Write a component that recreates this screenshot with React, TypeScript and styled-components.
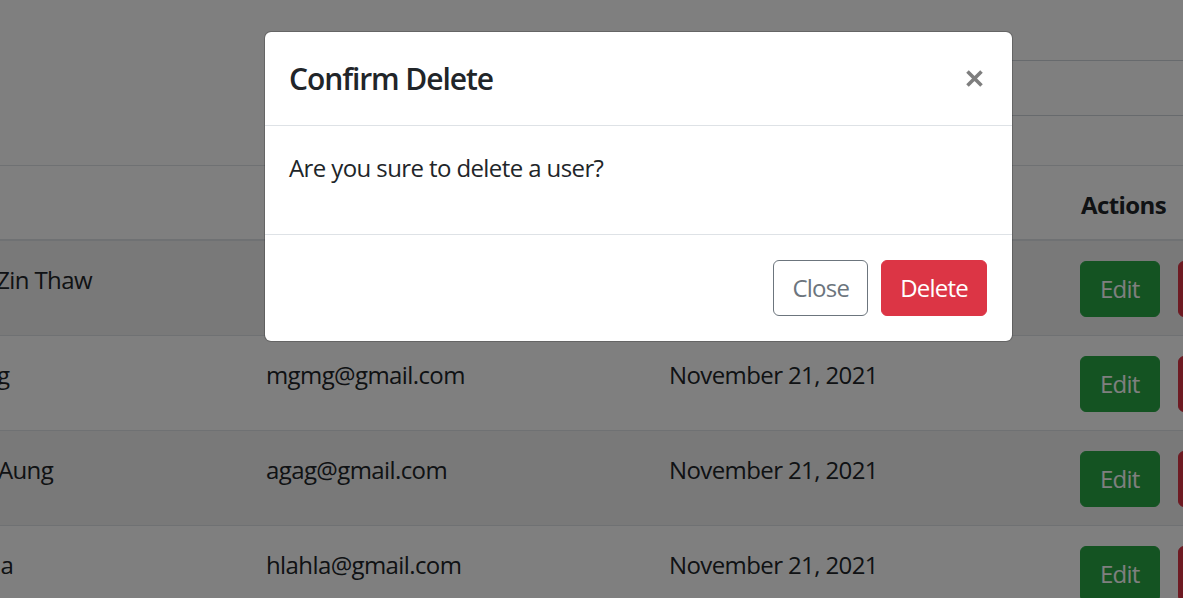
import React from 'react';
import styled, { createGlobalStyle } from 'styled-components';

const GlobalStyle = createGlobalStyle`
  * { box-sizing: border-box; }
  html, body { margin: 0; padding: 0; }
  body {
    width: 1183px;
    height: 598px;
    overflow: hidden;
    background: #fff;
    color: #212529;
    font-family: "Open Sans", "Noto Sans", sans-serif;
    font-size: 24px;
    line-height: 1.5;
    letter-spacing: -0.025em;
  }
`;

const Page = styled.div`
  position: relative;
  width: 1183px;
  height: 598px;
  overflow: hidden;
`;

const Canvas = styled.div`
  margin-left: -81px;
  width: 1400px;
`;

const TopBar = styled.div`
  height: 165px;
  padding-top: 60px;
  display: flex;
  justify-content: flex-end;
`;

const SearchInput = styled.input`
  width: 560px;
  height: 56px;
  margin-right: 78px;
  border: 1px solid #ced4da;
  border-radius: 6px;
  padding: 9px 18px;
  font: inherit;
  color: #495057;
  background: #fff;
`;

const Table = styled.table`
  border-collapse: collapse;
  table-layout: fixed;
  width: 1400px;
`;

const Th = styled.th`
  text-align: left;
  vertical-align: bottom;
  font-weight: 700;
  padding: 21px 18px 16px;
  border-top: 1px solid #dee2e6;
  border-bottom: 2px solid #dee2e6;
`;

const Row = styled.tr<{ $striped: boolean }>`
  background: ${(p) => (p.$striped ? 'rgba(0,0,0,0.05)' : 'transparent')};
`;

const Td = styled.td`
  padding: 21px 18px 15px;
  vertical-align: top;
  border-top: 1px solid #dee2e6;
  white-space: nowrap;
`;

const ActionCell = styled.td`
  padding: 18px 18px 18px 17px;
  vertical-align: top;
  border-top: 1px solid #dee2e6;
`;

const ActionGroup = styled.div`
  display: flex;
  gap: 18px;
  margin-top: 2px;
`;

const Btn = styled.button<{ $variant: 'success' | 'danger' | 'outline'; $wide?: boolean }>`
  display: inline-block;
  height: 56px;
  padding: 9px ${(p) => (p.$wide ? '19px' : '18px')};
  font: inherit;
  font-size: 24px;
  line-height: 36px;
  letter-spacing: -0.032em;
  border-radius: 6px;
  border: 1px solid
    ${(p) => (p.$variant === 'success' ? '#28a745' : p.$variant === 'danger' ? '#dc3545' : '#6c757d')};
  background: ${(p) => (p.$variant === 'success' ? '#28a745' : p.$variant === 'danger' ? '#dc3545' : 'transparent')};
  color: ${(p) => (p.$variant === 'outline' ? '#6c757d' : '#fff')};
  white-space: nowrap;
`;

const Backdrop = styled.div`
  position: absolute;
  inset: 0;
  background: rgba(0, 0, 0, 0.5);
`;

const Dialog = styled.div`
  position: absolute;
  left: 264px;
  top: 31px;
  width: 749px;
  background: #fff;
  background-clip: padding-box;
  border: 1px solid rgba(0, 0, 0, 0.2);
  border-radius: 7px;
`;

const DialogHeader = styled.div`
  display: flex;
  align-items: flex-start;
  justify-content: space-between;
  padding: 24px;
  border-bottom: 1px solid #dee2e6;
`;

const Title = styled.h5`
  margin: 0;
  font-size: 30px;
  font-weight: 600;
  line-height: 45px;
  letter-spacing: -0.036em;
  color: #212529;
`;

const CloseX = styled.button`
  width: 28px;
  height: 45px;
  padding: 0;
  border: 0;
  background: transparent;
  display: flex;
  align-items: center;
  justify-content: center;
  opacity: 0.5;
  color: #000;
`;

const DialogBody = styled.div`
  padding: 24px;
`;

const Message = styled.p`
  margin: 0 0 24px;
`;

const DialogFooter = styled.div`
  display: flex;
  justify-content: flex-end;
  align-items: center;
  gap: 13px;
  padding: 25px 25px 25px 24px;
  border-top: 1px solid #dee2e6;
`;

const users = [
  { name: 'Phyu Zin Thaw', email: 'phyuzin@gmail.com', date: 'November 21, 2021' },
  { name: 'Mg Mg', email: 'mgmg@gmail.com', date: 'November 21, 2021' },
  { name: 'Aung Aung', email: 'agag@gmail.com', date: 'November 21, 2021' },
  { name: 'Hla Hla', email: 'hlahla@gmail.com', date: 'November 21, 2021' },
];

export default function App() {
  return (
    <>
      <GlobalStyle />
      <Page>
        <Canvas>
          <TopBar>
            <SearchInput defaultValue="" />
          </TopBar>
          <Table>
            <colgroup>
              <col style={{ width: 329 }} />
              <col style={{ width: 403 }} />
              <col style={{ width: 412 }} />
              <col />
            </colgroup>
            <thead>
              <tr>
                <Th>User</Th>
                <Th>Email</Th>
                <Th>Created At</Th>
                <Th>Actions</Th>
              </tr>
            </thead>
            <tbody>
              {users.map((u, i) => (
                <Row key={u.email} $striped={i % 2 === 0}>
                  <Td>{u.name}</Td>
                  <Td>{u.email}</Td>
                  <Td>{u.date}</Td>
                  <ActionCell>
                    <ActionGroup>
                      <Btn $variant="success" $wide>Edit</Btn>
                      <Btn $variant="danger">Delete</Btn>
                    </ActionGroup>
                  </ActionCell>
                </Row>
              ))}
            </tbody>
          </Table>
        </Canvas>
        <Backdrop />
        <Dialog>
          <DialogHeader>
            <Title>Confirm Delete</Title>
            <CloseX aria-label="Close">
              <svg width="19" height="19" viewBox="0 0 19 19">
                <path d="M2.5 2.5 L16.5 16.5 M16.5 2.5 L2.5 16.5" stroke="currentColor" strokeWidth="3.6" strokeLinecap="butt" />
              </svg>
            </CloseX>
          </DialogHeader>
          <DialogBody>
            <Message>Are you sure to delete a user?</Message>
          </DialogBody>
          <DialogFooter>
            <Btn $variant="outline">Close</Btn>
            <Btn $variant="danger">Delete</Btn>
          </DialogFooter>
        </Dialog>
      </Page>
    </>
  );
}
